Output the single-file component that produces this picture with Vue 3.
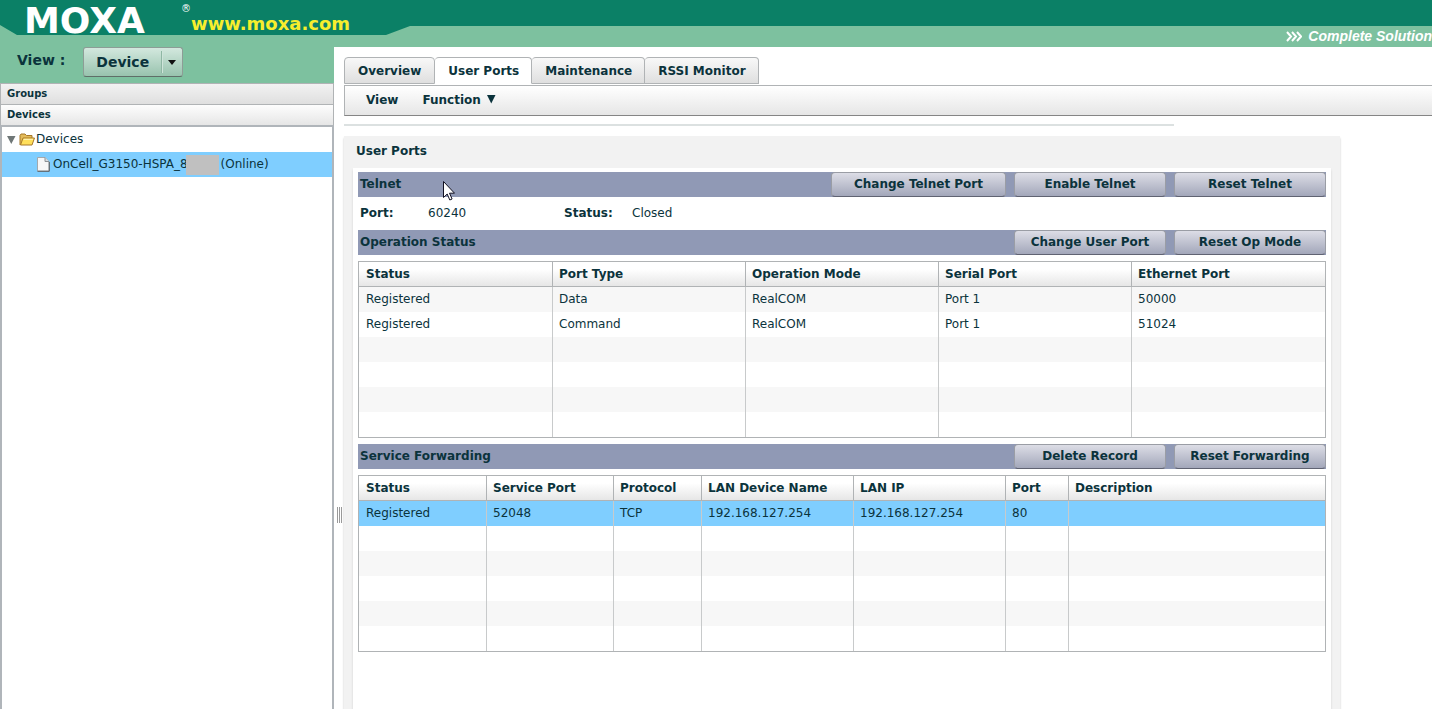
<script setup>
import { ref } from 'vue'

const view = ref('Device')
const activeTab = ref('User Ports')
const tabs = ['Overview', 'User Ports', 'Maintenance', 'RSSI Monitor']

const portColumns = ['Status', 'Port Type', 'Operation Mode', 'Serial Port', 'Ethernet Port']
const portRows = [
  ['Registered', 'Data', 'RealCOM', 'Port 1', '50000'],
  ['Registered', 'Command', 'RealCOM', 'Port 1', '51024'],
]

const serviceColumns = ['Status', 'Service Port', 'Protocol', 'LAN Device Name', 'LAN IP', 'Port', 'Description']
const serviceRows = [['Registered', '52048', 'TCP', '192.168.127.254', '192.168.127.254', '80', '']]

const fillRows = (rows, columns) =>
  Array.from({ length: 6 }, (_, i) => rows[i] ?? columns.map(() => ''))
</script>

<template>
  <div class="page">
    <header class="banner">
      <div class="banner-shape"></div>
      <div class="brand">
        <span class="logo">MOXA</span><span class="reg">®</span>
        <a class="site" href="#">www.moxa.com</a>
      </div>
      <div class="slogan">
        <svg width="16" height="11" viewBox="0 0 16 11" fill="none" stroke="#fff" stroke-width="2">
          <path d="M1 1 5 5.500 1 10M6 1l4 4.500L6 10M11 1l4 4.500L11 10" />
        </svg>
        <span>Complete Solution</span>
      </div>
    </header>

    <div class="body">
      <aside class="sidebar">
        <div class="view-row">
          <label for="view-select">View :</label>
          <div class="select-wrap">
            <select id="view-select" v-model="view">
              <option>Device</option>
            </select>
            <svg class="select-arrow" width="22" height="24" viewBox="0 0 22 24">
              <path d="M.5 1v22" stroke="#8fb7a4" />
              <path d="M1.500 1v22" stroke="#cfe4da" />
              <path d="M7 10h8l-4 5z" fill="#111" />
            </svg>
          </div>
        </div>
        <button class="section-head groups" type="button">Groups</button>
        <button class="section-head" type="button">Devices</button>
        <div class="tree">
          <div class="node">
            <svg class="twisty" width="9" height="8" viewBox="0 0 9 8"><path d="M0 0h8.500L4.250 8z" fill="#6f7777" /></svg>
            <svg class="folder" width="16" height="13" viewBox="0 0 16 13">
              <path d="M1 12V2.500L2 1h4l1.500 1.500H13V5" fill="#e3bb59" stroke="#a87928" />
              <path d="M1.500 12 4 5h11.500L13 12z" fill="#ffdf5b" stroke="#a87928" stroke-linejoin="round" />
              <path d="M4.700 6.300h9.300" stroke="#fff6c4" />
            </svg>
            <span class="name">Devices</span>
          </div>
          <div class="node leaf selected">
            <svg class="doc" width="13" height="15" viewBox="0 0 13 15">
              <path d="M.5.500h7.500l4 4V14H.500z" fill="#f7f7f7" stroke="#a3a9ad" />
              <path d="M8 .500v4h4" fill="#d8dadc" stroke="#8c9195" />
              <path d="M.500 14.300H12.300V5" fill="none" stroke="#595f63" />
            </svg>
            <span class="name">OnCell_G3150-HSPA_8</span><span class="mask"></span><span class="name">(Online)</span>
          </div>
        </div>
      </aside>

      <div class="splitter"><i></i></div>

      <main class="main">
        <nav class="tabs">
          <button
            v-for="t in tabs"
            :key="t"
            type="button"
            class="tab"
            :class="{ active: t === activeTab }"
            @click="activeTab = t"
          >{{ t }}</button>
        </nav>
        <div class="menubar">
          <button type="button">View</button>
          <button type="button">Function <svg class="caret" width="9" height="9" viewBox="0 0 9 9"><path d="M0 0h8.500L4.250 8.500z" fill="#0b333c" /></svg></button>
        </div>
        <div class="rule"></div>

        <section class="panel">
          <h1>User Ports</h1>
          <div class="content">
            <div class="bar">
              <h2>Telnet</h2>
              <button class="wide" type="button">Change Telnet Port</button>
              <button type="button">Enable Telnet</button>
              <button type="button">Reset Telnet</button>
            </div>
            <dl class="facts">
              <dt>Port:</dt>
              <dd class="port">60240</dd>
              <dt>Status:</dt>
              <dd>Closed</dd>
            </dl>

            <div class="bar">
              <h2>Operation Status</h2>
              <button type="button">Change User Port</button>
              <button type="button">Reset Op Mode</button>
            </div>
            <table class="grid ports">
              <thead>
                <tr><th v-for="c in portColumns" :key="c">{{ c }}</th></tr>
              </thead>
              <tbody>
                <tr v-for="(row, r) in fillRows(portRows, portColumns)" :key="r">
                  <td v-for="(cell, c) in row" :key="c">{{ cell }}</td>
                </tr>
              </tbody>
            </table>

            <div class="bar">
              <h2>Service Forwarding</h2>
              <button type="button">Delete Record</button>
              <button type="button">Reset Forwarding</button>
            </div>
            <table class="grid services">
              <thead>
                <tr><th v-for="c in serviceColumns" :key="c">{{ c }}</th></tr>
              </thead>
              <tbody>
                <tr v-for="(row, r) in fillRows(serviceRows, serviceColumns)" :key="r" :class="{ picked: r === 0 }">
                  <td v-for="(cell, c) in row" :key="c">{{ cell }}</td>
                </tr>
              </tbody>
            </table>
          </div>
        </section>
      </main>
    </div>

    <svg class="pointer" width="12" height="20" viewBox="0 0 12 20">
      <path d="M.5.500v16l3.700-3.500 2.600 6 2.300-1-2.600-5.800h5z" fill="#fff" stroke="#111122" />
    </svg>
  </div>
</template>

<style>
body {
  margin: 0;
  background: #fff;
}
</style>

<style scoped>
.page {
  position: relative;
  display: flex;
  flex-direction: column;
  min-height: 100vh;
  overflow: hidden;
  font: 12px/24px "DejaVu Sans", Verdana, sans-serif;
  color: #0b333c;
}
button,
select {
  margin: 0;
  font: inherit;
  color: inherit;
  cursor: pointer;
}

.banner {
  position: relative;
  display: flex;
  justify-content: space-between;
  height: 47px;
  background: #7dc19f;
}
.banner-shape {
  position: absolute;
  inset: 0;
  background: #0b8066;
  clip-path: polygon(0 0, 100% 0, 100% 26px, 410px 26px, 386px 35px, 17px 35px, 0 25px);
}
.brand {
  position: relative;
  display: flex;
  padding-left: 24px;
  color: #fff;
}
.logo {
  min-width: 157px;
  font-size: 36px;
  font-weight: bold;
  line-height: 42px;
}
.reg {
  font-size: 10px;
  line-height: 18px;
}
.site {
  font-size: 18px;
  font-weight: bold;
  line-height: 48px;
  color: #f7ee2d;
  text-decoration: none;
}
.slogan {
  position: relative;
  display: flex;
  align-items: center;
  align-self: flex-end;
  gap: 6px;
  height: 22px;
  font: italic bold 14px/20px "Liberation Sans", Arial, sans-serif;
  color: #fff;
}

.body {
  display: flex;
  flex: 1;
}
.sidebar {
  display: flex;
  flex-direction: column;
  flex: none;
  width: 334px;
}
.view-row {
  display: flex;
  align-items: flex-start;
  gap: 18px;
  height: 36px;
  padding-left: 17px;
  background: #7dc19f;
  font-size: 14px;
  font-weight: bold;
  line-height: 26px;
}
.select-wrap {
  position: relative;
  height: 30px;
}
.select-wrap select {
  appearance: none;
  width: 100px;
  height: 30px;
  padding: 0 24px 0 12px;
  border: 1px solid #8d9d96;
  border-bottom-color: #5f6f68;
  border-radius: 3px;
  background: linear-gradient(#d3e8de, #98c3ae);
}
.select-arrow {
  position: absolute;
  top: 3px;
  right: 0;
  pointer-events: none;
}
.section-head {
  height: 21px;
  padding: 0 6px;
  border: 1px solid #b0b3b5;
  border-bottom: 0;
  background: linear-gradient(#fdfdfd, #e6e6e6);
  font-size: 10px;
  font-weight: bold;
  line-height: 18px;
  text-align: left;
}
.section-head.groups {
  background: linear-gradient(#f2f2f2, #dfdfdf);
}
.tree {
  flex: 1;
  border: 2px solid #b0b5ba;
  border-bottom: 0;
}
.node {
  display: flex;
  align-items: center;
  height: 25px;
  padding-left: 5px;
}
.name {
  padding-bottom: 2px;
}
.folder {
  margin: 0 1px 0 3px;
}
.leaf {
  padding-left: 35px;
}
.doc {
  margin-right: 3px;
}
.selected {
  background: #7fceff;
}
.mask {
  z-index: 1;
  width: 33px;
  height: 20px;
  margin: 0 2px 0 -2px;
  background: #c0c0c0;
}

.splitter {
  display: flex;
  flex: none;
  align-items: center;
  justify-content: center;
  box-sizing: border-box;
  width: 10px;
  padding-top: 274px;
}
.splitter i {
  width: 5px;
  height: 16px;
  background: repeating-linear-gradient(90deg, #9a9a9a 0 1px, #fff 1px 2px);
}

.main {
  display: flex;
  flex: 1;
  flex-direction: column;
  min-width: 0;
  padding-top: 10px;
}
.tabs {
  display: flex;
  height: 28px;
}
.tab {
  height: 27px;
  padding: 0 12px 0 13px;
  border: 1px solid #b0b3b5;
  border-left-width: 0;
  border-radius: 4px 4px 0 0;
  background: linear-gradient(#f8f8f8, #dfdfdf);
  font-weight: bold;
}
.tab:first-child {
  padding-right: 13px;
  border-left-width: 1px;
}
.tab.active {
  border-bottom-color: #fff;
  background: #fff;
}
.menubar {
  display: flex;
  gap: 24px;
  height: 29px;
  padding-left: 21px;
  border: 1px solid #b0b3b5;
  border-right: 0;
  border-bottom-color: #858585;
  background: linear-gradient(#fff, #e6e6e6);
}
.menubar button {
  padding: 0 0 2px;
  border: 0;
  background: none;
  font-weight: bold;
}
.caret {
  margin-left: 2px;
}
.rule {
  height: 2px;
  margin: 8px 258px 10px 0;
  background: #dce1e1;
}
.panel {
  display: flex;
  flex: 1;
  flex-direction: column;
  margin-right: 92px;
  padding: 0 9px;
  background: #f2f2f2;
  box-shadow: 0 2px 2px #c8c8c8;
}
.panel h1 {
  margin: 0;
  padding: 3px 3px 5px;
  font-size: 12px;
  line-height: 24px;
}
.content {
  flex: 1;
  padding: 4px 5px;
  background: #fff;
  box-shadow: 0 2px 2px #d0d0d0;
}
.bar {
  display: flex;
  gap: 8px;
  height: 25px;
  padding-left: 2px;
  background: #9099b5;
}
.bar h2 {
  flex: 1;
  margin: 0;
  font-size: 12px;
  line-height: 24px;
}
.bar button {
  width: 152px;
  padding: 0 0 2px;
  border: 1px solid #9a9da5;
  border-bottom-color: #606372;
  border-radius: 4px;
  background: linear-gradient(#dcdde6, #a3a7ba);
  font-weight: bold;
  line-height: 20px;
}
.bar button.wide {
  width: 175px;
}
.facts {
  display: flex;
  height: 33px;
  margin: 0;
  padding-left: 2px;
  line-height: 32px;
}
.facts dt {
  width: 68px;
  font-weight: bold;
}
.facts dd {
  margin: 0;
}
.facts .port {
  width: 136px;
}
.grid {
  width: 100%;
  margin: 6px 0;
  table-layout: fixed;
  border: 1px solid #b0b3b5;
  border-collapse: separate;
  border-spacing: 0;
}
.grid th,
.grid td {
  box-sizing: border-box;
  height: 25px;
  padding: 0 0 0 6px;
  border-right: 1px solid #c8cacb;
  line-height: 22px;
  text-align: left;
  white-space: nowrap;
}
.grid td {
  padding-bottom: 2px;
}
.grid th:first-child,
.grid td:first-child {
  padding-left: 7px;
}
.grid th {
  border-right-color: #b0b3b5;
  border-bottom: 1px solid #b0b3b5;
  background: linear-gradient(#fff 30%, #e6e6e6);
}
.grid th:last-child,
.grid td:last-child {
  border-right: 0;
}
.ports th:first-child {
  width: 194px;
}
.grid tbody tr:nth-child(odd) {
  background: #f7f7f7;
}
.services tbody tr.picked {
  background: #7fceff;
}
.services th:nth-child(1) { width: 128px; }
.services th:nth-child(2) { width: 127px; }
.services th:nth-child(3) { width: 88px; }
.services th:nth-child(4) { width: 152px; }
.services th:nth-child(5) { width: 152px; }
.services th:nth-child(6) { width: 63px; }

.pointer {
  position: absolute;
  top: 181px;
  left: 443px;
}
</style>
